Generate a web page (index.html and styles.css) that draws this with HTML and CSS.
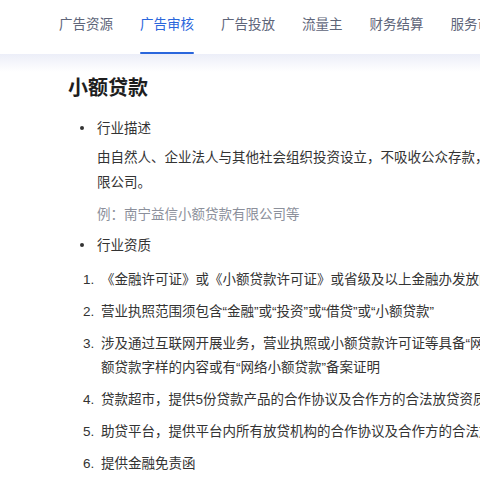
FILE: index.html
```html
<!DOCTYPE html>
<html lang="zh-CN">
<head>
<meta charset="utf-8">
<title>小额贷款</title>
<link rel="stylesheet" href="styles.css">
</head>
<body>
<header class="nav">
  <a class="tab">广告资源</a>
  <a class="tab active">广告审核</a>
  <a class="tab">广告投放</a>
  <a class="tab">流量主</a>
  <a class="tab">财务结算</a>
  <a class="tab">服务市场</a>
</header>
<main class="page">
  <h1 class="title">小额贷款</h1>
  <ul class="sections">
    <li class="section">
      <div class="section-head"><span class="dot"></span>行业描述</div>
      <p class="desc">由自然人、企业法人与其他社会组织投资设立，不吸收公众存款，经营小额贷款业务的有限责任公司或股份有限公司。</p>
      <p class="example">例：南宁益信小额贷款有限公司等</p>
    </li>
    <li class="section">
      <div class="section-head"><span class="dot"></span>行业资质</div>
      <ol class="items">
        <li class="item"><span class="num">1.</span><span class="text">《金融许可证》或《小额贷款许可证》或省级及以上金融办发放的批准文件</span></li>
        <li class="item"><span class="num">2.</span><span class="text">营业执照范围须包含“金融”或“投资”或“借贷”或“小额贷款”</span></li>
        <li class="item"><span class="num">3.</span><span class="text">涉及通过互联网开展业务，营业执照或小额贷款许可证等具备“网络小额贷款”经营范围，或执照含有网络小额贷款字样的内容或有“网络小额贷款”备案证明</span></li>
        <li class="item"><span class="num">4.</span><span class="text">贷款超市，提供5份贷款产品的合作协议及合作方的合法放贷资质</span></li>
        <li class="item"><span class="num">5.</span><span class="text">助贷平台，提供平台内所有放贷机构的合作协议及合作方的合法放贷资质</span></li>
        <li class="item"><span class="num">6.</span><span class="text">提供金融免责函</span></li>
      </ol>
    </li>
  </ul>
</main>
</body>
</html>
```
FILE: styles.css
```css
html, body {
  margin: 0;
  padding: 0;
  overflow: hidden;
  background: #fff;
}
body {
  font-family: "Liberation Sans", "Noto Sans CJK SC", sans-serif;
  color: #333;
  width: 820px;
  text-autospace: no-autospace;
}
.nav {
  display: flex;
  gap: 27px;
  height: 54px;
  padding-left: 59px;
  box-sizing: border-box;
  background: #fff;
  white-space: nowrap;
}
.tab {
  position: relative;
  flex: none;
  padding-top: 15px;
  font-size: 13.5px;
  line-height: 20px;
  color: #5e6579;
  cursor: pointer;
}
.tab.active {
  color: #2a66dc;
}
.tab.active::after {
  content: "";
  position: absolute;
  left: 0;
  right: 0;
  bottom: 0;
  height: 2.5px;
  border-radius: 2px;
  background: #2a66dc;
}
.page {
  padding: 21px 0 0 68px;
  background: linear-gradient(#eceef8, #fff 18px);
}
.title {
  margin: 0;
  font-size: 20px;
  line-height: 26px;
  font-weight: 700;
  color: #1e1e1e;
}
.sections {
  list-style: none;
  margin: 0;
  padding: 0 0 0 12px;
  width: 690px;
}
.section {
  margin-top: 14.5px;
}
.section + .section {
  margin-top: 6px;
}
.section-head {
  display: flex;
  align-items: center;
  gap: 13px;
  font-size: 13.5px;
  line-height: 25px;
  color: #333;
}
.dot {
  width: 4px;
  height: 4px;
  border-radius: 50%;
  background: #333;
  flex: none;
}
.desc {
  margin: 4px 0 0 17px;
  width: 654.5px;
  font-size: 13.5px;
  line-height: 25px;
  color: #333;
}
.example {
  margin: 7px 0 0 17px;
  font-size: 13.5px;
  line-height: 25px;
  color: #8c909b;
}
.items {
  list-style: none;
  margin: 10px 0 0 3px;
  padding: 0;
}
.item {
  display: flex;
  margin-bottom: 8px;
  font-size: 13.5px;
  line-height: 24px;
  color: #333;
}
.num {
  flex: none;
  width: 18px;
}
.text {
  width: 641px;
}
```
